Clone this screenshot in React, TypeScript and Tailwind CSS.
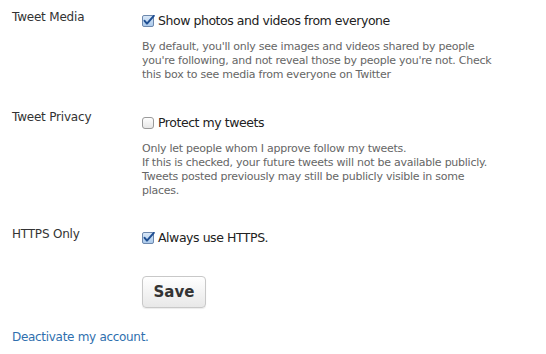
import React from "react";

function Check({ checked }: { checked: boolean }) {
  return (
    <svg width="13" height="13" viewBox="0 0 13 13" className="shrink-0">
      <defs>
        <linearGradient id={checked ? "gc" : "gu"} x1="0" y1="0" x2="0" y2="1">
          <stop offset="0" stopColor={checked ? "#dbe9f8" : "#ffffff"} />
          <stop offset="1" stopColor={checked ? "#a9c8ea" : "#e6e6e6"} />
        </linearGradient>
      </defs>
      <rect x="0.5" y="0.5" width="11" height="11" rx={checked ? 1.5 : 2.5} fill={`url(#${checked ? "gc" : "gu"})`} stroke={checked ? "#6d88ad" : "#9a9a9a"} />
      {checked && (
        <path d="M2.6 5.8 L5 8.6 L11.8 0.8" fill="none" stroke="#1f4f93" strokeWidth="2" strokeLinecap="round" strokeLinejoin="round" />
      )}
    </svg>
  );
}

function Row({
  label,
  checked,
  text,
  desc,
  offset,
}: {
  label: string;
  checked: boolean;
  text: string;
  desc?: string[];
  offset: string;
}) {
  return (
    <div className="flex">
      <div className="w-[142px] pl-3 text-[12px] tracking-[-0.2px] leading-[18px] text-[#333]">{label}</div>
      <div className={offset}>
        <div className="flex items-center gap-[3px] h-[18px] text-[12.5px] tracking-[-0.45px] text-[#222]">
          <Check checked={checked} />
          <span>{text}</span>
        </div>
        {desc && (
          <div className="mt-[10px] text-[11px] tracking-[-0.25px] leading-[14px] text-[#666]">
            {desc.map((d, i) => (
              <div key={i}>{d}</div>
            ))}
          </div>
        )}
      </div>
    </div>
  );
}

export default function App() {
  return (
    <div
      className="w-[546px] h-[354px] bg-white pt-[8px]"
      style={{ fontFamily: '"Lucida Grande", "DejaVu Sans", sans-serif' }}
    >
      <Row
        label="Tweet Media"
        checked={true}
        text="Show photos and videos from everyone"
        offset="mt-[4px]"
        desc={[
          "By default, you'll only see images and videos shared by people",
          "you're following, and not reveal those by people you're not. Check",
          "this box to see media from everyone on Twitter",
        ]}
      />
      <div className="h-[26px]" />
      <Row
        label="Tweet Privacy"
        checked={false}
        text="Protect my tweets"
        offset="mt-[6px]"
        desc={[
          "Only let people whom I approve follow my tweets.",
          "If this is checked, your future tweets will not be available publicly.",
          "Tweets posted previously may still be publicly visible in some",
          "places.",
        ]}
      />
      <div className="h-[27px]" />
      <Row label="HTTPS Only" checked={true} text="Always use HTTPS." offset="mt-[4px]" />
      <div className="pl-[142px] mt-[29px]">
        <button className="w-[64px] h-[32px] rounded-[4px] border border-[#c8c8c8] bg-gradient-to-b from-[#ffffff] to-[#e8e8e8] text-[15px] font-bold text-[#333] shadow-[0_1px_1px_rgba(0,0,0,0.08)]">
          Save
        </button>
      </div>
      <div className="pl-3 mt-[20px] text-[12px] tracking-[-0.3px] leading-[18px] text-[#2f6fae]">
        <a href="#">Deactivate my account.</a>
      </div>
    </div>
  );
}
